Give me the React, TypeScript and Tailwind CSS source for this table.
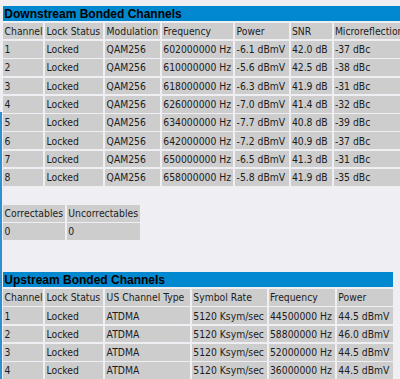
import React from "react";

const ds = [
  ["1", "Locked", "QAM256", "602000000 Hz", "-6.1 dBmV", "42.0 dB", "-37 dBc"],
  ["2", "Locked", "QAM256", "610000000 Hz", "-5.6 dBmV", "42.5 dB", "-38 dBc"],
  ["3", "Locked", "QAM256", "618000000 Hz", "-6.3 dBmV", "41.9 dB", "-31 dBc"],
  ["4", "Locked", "QAM256", "626000000 Hz", "-7.0 dBmV", "41.4 dB", "-32 dBc"],
  ["5", "Locked", "QAM256", "634000000 Hz", "-7.7 dBmV", "40.8 dB", "-39 dBc"],
  ["6", "Locked", "QAM256", "642000000 Hz", "-7.2 dBmV", "40.9 dB", "-37 dBc"],
  ["7", "Locked", "QAM256", "650000000 Hz", "-6.5 dBmV", "41.3 dB", "-31 dBc"],
  ["8", "Locked", "QAM256", "658000000 Hz", "-5.8 dBmV", "41.9 dB", "-35 dBc"],
];
const dsHead = ["Channel", "Lock Status", "Modulation", "Frequency", "Power", "SNR", "Microreflections"];

const us = [
  ["1", "Locked", "ATDMA", "5120 Ksym/sec", "44500000 Hz", "44.5 dBmV"],
  ["2", "Locked", "ATDMA", "5120 Ksym/sec", "58800000 Hz", "46.0 dBmV"],
  ["3", "Locked", "ATDMA", "5120 Ksym/sec", "52000000 Hz", "44.5 dBmV"],
  ["4", "Locked", "ATDMA", "5120 Ksym/sec", "36000000 Hz", "44.5 dBmV"],
];
const usHead = ["Channel", "Lock Status", "US Channel Type", "Symbol Rate", "Frequency", "Power"];

function Cell({ children }: { children: React.ReactNode }) {
  return (
    <div className="h-[16.7px] bg-[#cdcdcd] pl-[1.3px] flex items-center whitespace-nowrap overflow-hidden text-[10.3px] leading-none text-[#1c1c1c]">
      {children}
    </div>
  );
}

function Title({ children }: { children: React.ReactNode }) {
  return (
    <div
      className="h-[15px] bg-[#0288cf] pl-[1px] flex items-center whitespace-nowrap text-[12px] font-bold leading-none text-black"
      style={{ fontFamily: '"Liberation Sans", Arial, sans-serif' }}
    >
      {children}
    </div>
  );
}

export default function App() {
  return (
    <div
      className="w-[400px] h-[379px] overflow-hidden bg-[#eeeef3] relative"
      style={{ fontFamily: '"DejaVu Sans Condensed", Tahoma, "DejaVu Sans", sans-serif' }}
    >
      <div className="absolute left-0 top-[112px] bottom-0 w-[1.5px] bg-[#2f8fd0]" />
      <div className="pl-[3.3px] pt-[6.1px] w-[440px]">
        <div className="w-[423px] flex flex-col gap-[1.6px]">
          <Title>Downstream Bonded Channels</Title>
          <div className="grid grid-cols-[40px_58px_54.7px_71.3px_53.3px_41px_90px] gap-x-[2px] gap-y-[1.6px]">
            {dsHead.map((h) => (
              <Cell key={h}>{h}</Cell>
            ))}
            {ds.map((r, i) => r.map((c, j) => <Cell key={i + "-" + j}>{c}</Cell>))}
          </div>
        </div>

        <div className="mt-[19.2px] grid grid-cols-[61.7px_73px] w-fit gap-x-[2px] gap-y-[1.6px]">
          <Cell>Correctables</Cell>
          <Cell>Uncorrectables</Cell>
          <Cell>0</Cell>
          <Cell>0</Cell>
        </div>

        <div className="mt-[32.7px] w-[389.4px] flex flex-col gap-[1.6px]">
          <Title>Upstream Bonded Channels</Title>
          <div className="grid grid-cols-[40px_58px_84.7px_74.7px_66.3px_55.7px] gap-x-[2px] gap-y-[1.6px]">
            {usHead.map((h) => (
              <Cell key={h}>{h}</Cell>
            ))}
            {us.map((r, i) => r.map((c, j) => <Cell key={i + "-" + j}>{c}</Cell>))}
          </div>
        </div>
      </div>
    </div>
  );
}
